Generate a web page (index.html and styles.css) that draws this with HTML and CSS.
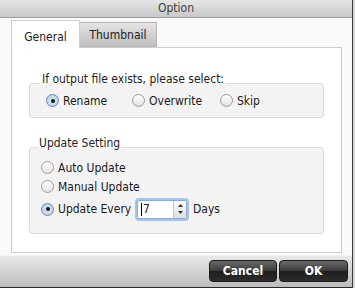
FILE: index.html
```html
<!DOCTYPE html>
<html lang="en">
<head>
    <meta charset="UTF-8">
    <title>Option</title>
    <link rel="stylesheet" href="styles.css">
</head>
<body>
    <div class="window">
        <div class="titlebar">Option</div>
        <div class="content">
            <div class="tabs">
                <div class="tab active">General</div>
                <div class="tab">Thumbnail</div>
            </div>
            <div class="panel">
                <fieldset class="group group-exists">
                    <legend>If output file exists, please select:</legend>
                    <div class="radio-row">
                        <label class="radio checked"><span class="dot"></span>Rename</label>
                        <label class="radio"><span class="dot"></span>Overwrite</label>
                        <label class="radio"><span class="dot"></span>Skip</label>
                    </div>
                </fieldset>
                <fieldset class="group group-update">
                    <legend>Update Setting</legend>
                    <div class="radio-col">
                        <label class="radio"><span class="dot"></span>Auto Update</label>
                        <label class="radio"><span class="dot"></span>Manual Update</label>
                        <div class="every">
                            <label class="radio checked"><span class="dot"></span>Update Every</label>
                            <div class="spin">
                                <span class="field"><span class="caret"></span>7</span>
                                <span class="stepper">
                                    <svg width="7" height="14" viewBox="0 0 7 14">
                                        <path d="M1 5 L3.5 2 L6 5 Z" fill="#333"/>
                                        <path d="M1 9 L3.5 12 L6 9 Z" fill="#333"/>
                                    </svg>
                                </span>
                            </div>
                            <span class="unit">Days</span>
                        </div>
                    </div>
                </fieldset>
            </div>
        </div>
        <div class="footer">
            <button class="btn">Cancel</button>
            <button class="btn">OK</button>
        </div>
    </div>
</body>
</html>
```

FILE: styles.css
```css
body {
    margin: 0;
    background: #d8d8d8;
    font-family: 'DejaVu Sans Condensed', 'DejaVu Sans', sans-serif;
    font-size: 12px;
    color: #1a1a1a;
}
.window {
    width: 352px;
    height: 287px;
    background: #fafafa;
    border-right: 1px solid #3a3a3a;
    border-bottom: 1px solid #2a2a2a;
    display: flex;
    flex-direction: column;
}
.titlebar {
    height: 17px;
    line-height: 17px;
    text-align: center;
    font-size: 12px;
    color: #404040;
    background: linear-gradient(#e6e6e6, #c9c9c9);
    border-bottom: 1px solid #9c9c9c;
}
.content {
    flex: 1;
    padding: 2px 10px 0 11px;
}
.tabs {
    display: flex;
    align-items: flex-end;
    height: 27px;
}
.tab {
    box-sizing: border-box;
    height: 25px;
    line-height: 24px;
    padding: 0 9px;
    text-align: center;
    border: 1px solid #b4b4b4;
    border-bottom: none;
    background: linear-gradient(#e4e4e4, #bdbdbd);
    color: #222;
}
.tab.active {
    height: 28px;
    width: 69px;
    line-height: 32px;
    background: #fff;
    border-color: #cfcfcf;
    margin-bottom: -1px;
    position: relative;
    z-index: 1;
}
.tab:not(.active) {
    width: 77px;
    border-left: none;
}
.panel {
    box-sizing: border-box;
    height: 206px;
    background: #fff;
    border: 1px solid #cdcdcd;
    padding: 24px 17px 0 17px;
}
.group {
    margin: 0;
    padding: 0;
    background: #f3f3f3;
    border: 1px solid #dadada;
    border-radius: 4px;
}
.group legend {
    padding: 0 2px 7px 2px;
    margin-left: 10px;
    line-height: 15px;
    color: #222;
}
.group-exists {
    padding-bottom: 7px;
}
.group-update {
    margin-top: 18px;
    padding-bottom: 11px;
}
.group-update legend {
    margin-left: 7px;
}
.radio-row {
    display: flex;
    margin-top: -3px;
    padding-left: 16px;
}
.radio-row .radio:nth-child(1) { width: 86px; }
.radio-row .radio:nth-child(2) { width: 88px; }
.radio {
    display: flex;
    align-items: center;
    gap: 4px;
    height: 19px;
}
.dot {
    box-sizing: border-box;
    width: 13px;
    height: 13px;
    border-radius: 50%;
    border: 1px solid #9d9d9d;
    background: linear-gradient(#ffffff, #e2e2e2);
    display: flex;
    align-items: center;
    justify-content: center;
}
.checked .dot {
    border-color: #6d86a8;
    background: radial-gradient(circle, #dbe8f8 0%, #b5cbe6 100%);
}
.checked .dot::after {
    content: '';
    width: 4px;
    height: 4px;
    border-radius: 50%;
    background: #111;
}
.radio-col {
    display: flex;
    flex-direction: column;
    padding-left: 11px;
}
.every {
    display: flex;
    align-items: center;
    height: 26px;
}
.every .radio {
    width: 96px;
}
.spin {
    display: flex;
    align-items: center;
    box-sizing: border-box;
    width: 50px;
    height: 19px;
    background: #fff;
    border: 1px solid #8daad0;
    box-shadow: 0 0 0 2px #a9c4e8;
    border-radius: 2px;
}
.field {
    flex: 1;
    display: flex;
    align-items: center;
    padding-left: 3px;
}
.caret {
    width: 1px;
    height: 13px;
    background: #000;
    margin-right: 1px;
}
.stepper {
    box-sizing: border-box;
    width: 13px;
    height: 17px;
    display: flex;
    align-items: center;
    justify-content: center;
    border-left: 1px solid #c5c5c5;
    background: linear-gradient(#fdfdfd, #e0e0e0);
    border-radius: 0 2px 2px 0;
}
.unit {
    margin-left: 6px;
}
.footer {
    height: 32px;
    display: flex;
    justify-content: flex-end;
    align-items: flex-start;
    gap: 2px;
    padding: 4px 4px 0 0;
    box-sizing: border-box;
    background: linear-gradient(#e9e9e9, #bcbcbc);
    border-top: 1px solid #f4f4f4;
}
.btn {
    width: 68px;
    height: 22px;
    border: 1px solid #1a1a1a;
    border-radius: 4px;
    background: linear-gradient(#6a6a6a, #3a3a3a 50%, #1e1e1e 51%, #2c2c2c);
    color: #fff;
    font-family: 'DejaVu Sans Condensed', 'DejaVu Sans', sans-serif;
    font-size: 12px;
    font-weight: bold;
    padding: 0;
}
.btn + .btn {
    width: 69px;
}
```
